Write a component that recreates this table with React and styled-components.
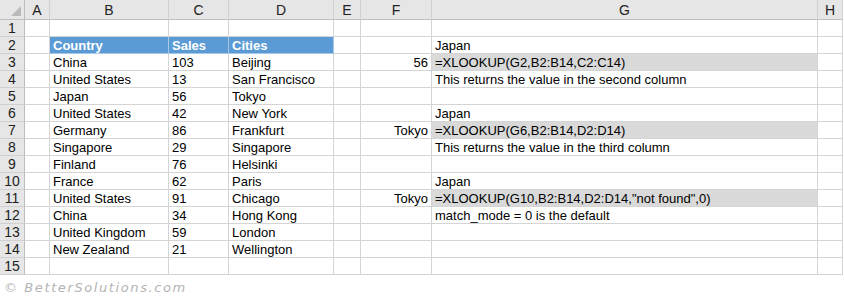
import React from "react";
import styled, { createGlobalStyle } from "styled-components";

const Global = createGlobalStyle`
  html, body { margin: 0; padding: 0; background: #ffffff; }
  body { font-family: Arial, "Liberation Sans", sans-serif; }
`;

const COLS = ["A", "B", "C", "D", "E", "F", "G", "H"];
const WIDTHS = [25, 25, 119, 60, 105, 27, 71, 386, 25];

const Page = styled.div`
  width: 844px;
  height: 299px;
  display: flex;
  flex-direction: column;
  background: #fff;
  overflow: hidden;
`;

const Sheet = styled.div`
  display: grid;
  grid-template-columns: ${WIDTHS.map((w) => w + "px").join(" ")};
  grid-template-rows: 20px repeat(15, 17px);
  font-family: Arial, "Liberation Sans", sans-serif;
  font-size: 13px;
  color: #000;
`;

const Corner = styled.div`
  box-sizing: border-box;
  background: #e6e6e6;
  border-right: 1px solid #bdbdbd;
  border-bottom: 1px solid #bdbdbd;
  display: flex;
  align-items: flex-end;
  justify-content: flex-end;
  padding: 0 3px 3px 0;
`;

const ColHeader = styled.div`
  box-sizing: border-box;
  background: #e6e6e6;
  border-right: 1px solid #d0d0d0;
  border-bottom: 1px solid #bdbdbd;
  display: flex;
  align-items: center;
  justify-content: center;
  font-size: 14px;
  color: #222;
  padding-top: 1px;
`;

const RowHeader = styled.div`
  box-sizing: border-box;
  background: #e6e6e6;
  border-right: 1px solid #bdbdbd;
  border-bottom: 1px solid #d0d0d0;
  display: flex;
  align-items: center;
  justify-content: center;
  font-size: 14px;
  color: #222;
`;

const Cell = styled.div`
  box-sizing: border-box;
  border-right: 1px solid
    ${(p) => (p.$variant === "head" ? "#a9c8e8" : "#d4d4d4")};
  border-bottom: 1px solid
    ${(p) => (p.$variant === "head" ? "#a9c8e8" : "#d4d4d4")};
  background: ${(p) =>
    p.$variant === "head"
      ? "#5b9bd5"
      : p.$variant === "formula"
      ? "#d9d9d9"
      : "#ffffff"};
  color: ${(p) => (p.$variant === "head" ? "#ffffff" : "#000000")};
  font-weight: ${(p) => (p.$variant === "head" ? "bold" : "normal")};
  display: flex;
  align-items: center;
  justify-content: ${(p) => (p.$align === "right" ? "flex-end" : "flex-start")};
  padding: 1px 3px 0 3px;
  white-space: nowrap;
  overflow: visible;
`;

const Footer = styled.div`
  flex: 1;
  display: flex;
  align-items: center;
  padding-left: 4px;
  font-family: "DejaVu Sans", sans-serif;
  font-style: italic;
  font-size: 13px;
  letter-spacing: 1.6px;
  color: #b4b4b4;
`;

const table = {
  2: { B: "Country", C: "Sales", D: "Cities", G: "Japan" },
  3: { B: "China", C: "103", D: "Beijing", F: "56", G: "=XLOOKUP(G2,B2:B14,C2:C14)" },
  4: { B: "United States", C: "13", D: "San Francisco", G: "This returns the value in the second column" },
  5: { B: "Japan", C: "56", D: "Tokyo" },
  6: { B: "United States", C: "42", D: "New York", G: "Japan" },
  7: { B: "Germany", C: "86", D: "Frankfurt", F: "Tokyo", G: "=XLOOKUP(G6,B2:B14,D2:D14)" },
  8: { B: "Singapore", C: "29", D: "Singapore", G: "This returns the value in the third column" },
  9: { B: "Finland", C: "76", D: "Helsinki" },
  10: { B: "France", C: "62", D: "Paris", G: "Japan" },
  11: { B: "United States", C: "91", D: "Chicago", F: "Tokyo", G: '=XLOOKUP(G10,B2:B14,D2:D14,"not found",0)' },
  12: { B: "China", C: "34", D: "Hong Kong", G: "match_mode = 0 is the default" },
  13: { B: "United Kingdom", C: "59", D: "London" },
  14: { B: "New Zealand", C: "21", D: "Wellington" },
};

const formulaRows = [3, 7, 11];

function variantFor(row, col) {
  if (row === 2 && ["B", "C", "D"].includes(col)) return "head";
  if (formulaRows.includes(row) && col === "G") return "formula";
  return "plain";
}

export default function App() {
  const rows = Array.from({ length: 15 }, (_, i) => i + 1);
  return (
    <Page>
      <Global />
      <Sheet>
        <Corner>
          <svg width="10" height="10" viewBox="0 0 10 10">
            <polygon points="10,0 10,10 0,10" fill="#b9b9b9" />
          </svg>
        </Corner>
        {COLS.map((c) => (
          <ColHeader key={c}>{c}</ColHeader>
        ))}
        {rows.map((r) => (
          <React.Fragment key={r}>
            <RowHeader>{r}</RowHeader>
            {COLS.map((c) => (
              <Cell
                key={c}
                $variant={variantFor(r, c)}
                $align={c === "F" ? "right" : "left"}
              >
                {(table[r] && table[r][c]) || ""}
              </Cell>
            ))}
          </React.Fragment>
        ))}
      </Sheet>
      <Footer>© BetterSolutions.com</Footer>
    </Page>
  );
}
